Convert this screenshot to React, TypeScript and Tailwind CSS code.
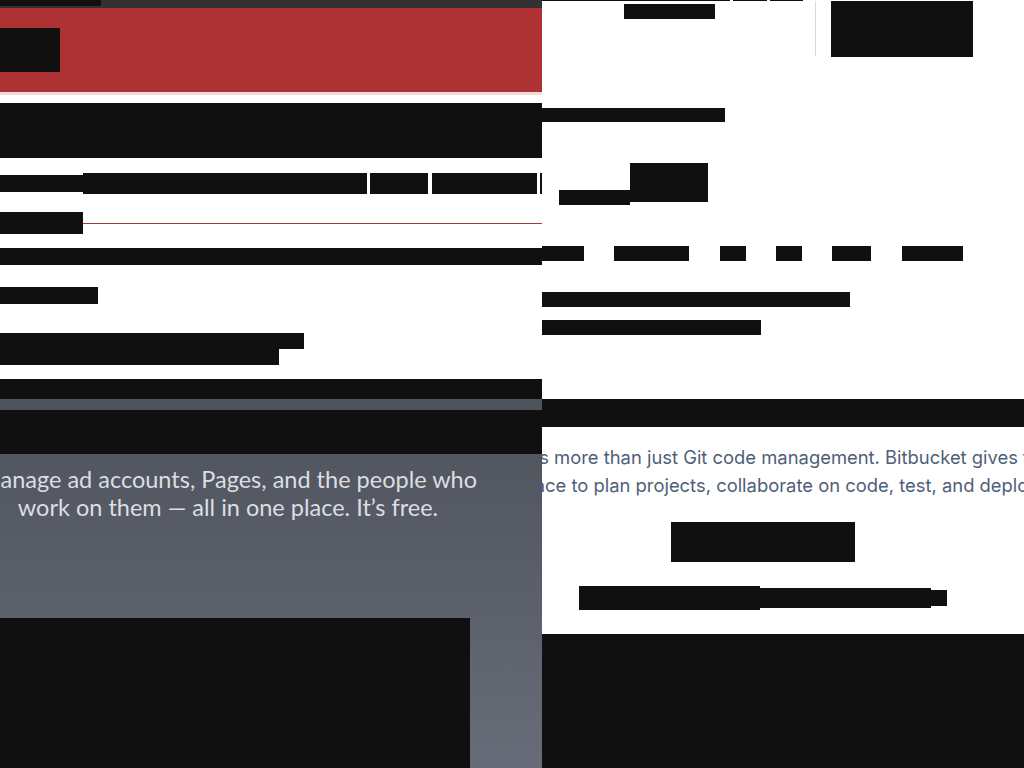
import React from 'react';

const Bar = ({ className = '' }: { className?: string }) => <div className={`bg-[#101010] ${className}`} />;

const navItems = [
  'w-[42px]',
  'ml-[30px] w-[75px]',
  'ml-[31px] w-[26px]',
  'ml-[30px] w-[26px]',
  'ml-[30px] w-[39px]',
  'ml-[31px] w-[61px]',
];

export default function App() {
  return (
    <div className="flex h-[768px] w-[1024px] overflow-hidden bg-white">
      {/* Left page crop */}
      <div className="flex w-[542px] shrink-0 flex-col overflow-hidden">
        <div className="h-[8px] bg-[#323232]">
          <Bar className="h-[6px] w-[101px]" />
        </div>
        <div className="h-[84px] bg-[#ae3133] pt-[20px]">
          <Bar className="h-[44px] w-[60px]" />
        </div>
        <div className="h-[3px] bg-[#f3dada]" />

        <div className="flex h-[304px] flex-col bg-white pt-[8px]">
          <Bar className="h-[55px] w-full" />
          <div className="mt-[15px] flex items-center">
            <Bar className="h-[17px] w-[83px]" />
            <Bar className="h-[21px] w-[284px]" />
            <Bar className="ml-[3px] h-[21px] w-[58px]" />
            <Bar className="ml-[4px] h-[21px] w-[105px]" />
            <Bar className="ml-[3px] h-[21px] w-[2px]" />
          </div>
          <div className="mt-[18px] flex items-start">
            <Bar className="h-[22px] w-[83px]" />
            <div className="mt-[11px] h-px flex-1 bg-[#9a3d3b]" />
          </div>
          <Bar className="mt-[14px] h-[17px] w-full" />
          <Bar className="mt-[22px] h-[17px] w-[98px]" />
          <Bar className="mt-[29px] h-[16px] w-[304px]" />
          <Bar className="h-[16px] w-[279px]" />
          <Bar className="mt-[14px] h-[20px] w-full" />
        </div>

        <div className="flex flex-1 flex-col bg-gradient-to-b from-[#4e525b] to-[#686c78] pt-[11px]">
          <Bar className="h-[44px] w-full" />
          <div
            className="mt-[11px] flex w-[456px] flex-col items-center text-[23.5px] leading-[28px] text-[#dcdee3]"
            style={{ fontFamily: 'Lato, "Open Sans", sans-serif' }}
          >
            <p className="whitespace-nowrap">Manage ad accounts, Pages, and the people who</p>
            <p className="whitespace-nowrap">work on them — all in one place. It’s free.</p>
          </div>
          <Bar className="mt-[97px] flex-1 w-[470px]" />
        </div>
      </div>

      {/* Right page crop */}
      <div className="flex flex-1 flex-col overflow-hidden bg-white">
        <div className="flex h-px">
          <Bar className="h-px w-[188px]" />
          <Bar className="ml-[3px] h-px w-[34px]" />
          <Bar className="ml-[3px] h-px w-[33px]" />
        </div>
        <div className="flex h-[56px] items-start">
          <div className="w-[273px] pl-[82px] pt-[3px]">
            <Bar className="h-[15px] w-[91px]" />
          </div>
          <div className="h-[55px] w-px bg-[#d9d9d9]" />
          <Bar className="ml-[15px] h-[56px] w-[142px]" />
        </div>

        <Bar className="mt-[51px] h-[14px] w-[183px]" />

        <div className="ml-[17px] mt-[41px] flex items-start">
          <Bar className="mt-[27px] h-[15px] w-[71px]" />
          <Bar className="h-[39px] w-[78px]" />
        </div>

        <div className="mt-[41px] flex">
          {navItems.map((c, i) => (
            <Bar key={i} className={`h-[15px] ${c}`} />
          ))}
        </div>

        <Bar className="mt-[31px] h-[15px] w-[308px]" />
        <Bar className="mt-[13px] h-[15px] w-[219px]" />

        <Bar className="mt-[64px] h-[28px] w-full" />

        <div className="flex w-[442px] flex-col items-center">
          <div
            className="mr-[2px] mt-[16px] flex flex-col items-center text-[18.4px] leading-[28px] text-[#505f79]"
            style={{ fontFamily: 'Inter, "Open Sans", sans-serif' }}
          >
            <p className="whitespace-nowrap">Bitbucket is more than just Git code management. Bitbucket gives teams</p>
            <p className="whitespace-nowrap">one place to plan projects, collaborate on code, test, and deploy.</p>
          </div>
          <Bar className="mt-[23px] h-[40px] w-[184px]" />
          <div className="mt-[24px] flex items-center">
            <Bar className="h-[24px] w-[181px]" />
            <Bar className="h-[20px] w-[171px]" />
            <Bar className="h-[16px] w-[16px]" />
          </div>
        </div>

        <Bar className="mt-[24px] flex-1 w-full" />
      </div>
    </div>
  );
}
